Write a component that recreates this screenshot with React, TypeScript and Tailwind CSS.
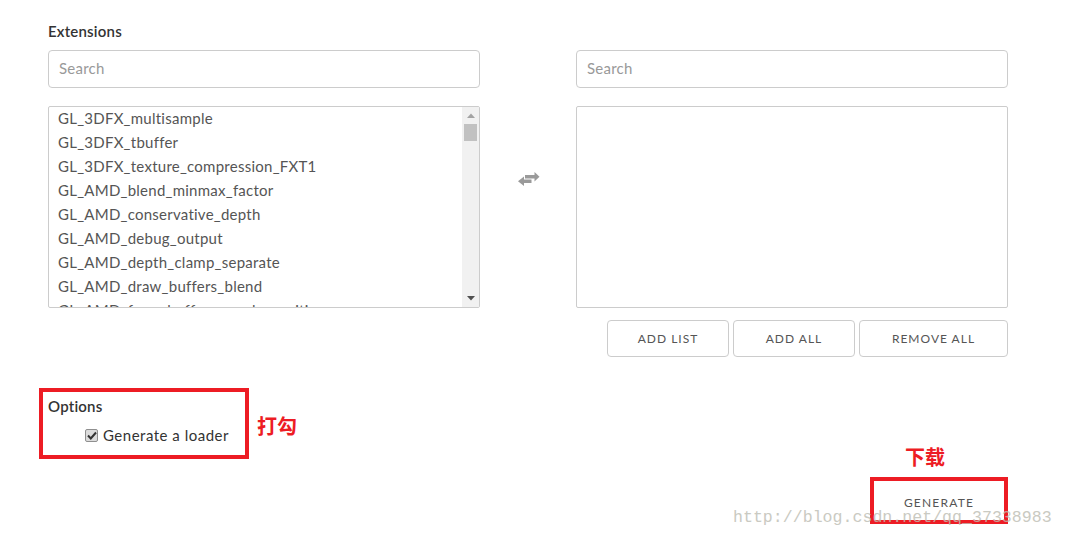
import React from "react";

const items = [
  "GL_3DFX_multisample",
  "GL_3DFX_tbuffer",
  "GL_3DFX_texture_compression_FXT1",
  "GL_AMD_blend_minmax_factor",
  "GL_AMD_conservative_depth",
  "GL_AMD_debug_output",
  "GL_AMD_depth_clamp_separate",
  "GL_AMD_draw_buffers_blend",
  "GL_AMD_framebuffer_sample_positions",
];

function SwapIcon() {
  return (
    <svg width="22" height="16" viewBox="0 0 22 16" fill="#9a9a9a">
      <rect x="7" y="4" width="10" height="3.5" />
      <polygon points="16.5,1 21.5,5.75 16.5,10.5" />
      <rect x="5.5" y="8.5" width="8" height="3.5" />
      <polygon points="0,10.25 6,5.5 6,15" />
    </svg>
  );
}

export default function App() {
  return (
    <div
      className="relative w-[1065px] h-[537px] bg-white overflow-hidden text-[#555]"
      style={{ fontFamily: "Lato, 'Noto Sans', sans-serif" }}
    >
      <div className="ml-[48px] w-[960px] pt-[21px]">
        <div className="text-[15px] font-semibold text-[#333] leading-[21px] tracking-[0.2px]">Extensions</div>

        <div className="mt-[8px] flex gap-[96px]">
          {/* left column */}
          <div className="w-[432px] flex flex-col gap-[18px]">
            <div className="h-[38px] border border-[#cccccc] rounded-[4px] flex items-center px-[10px] pb-[1px] text-[15px] text-[#999] tracking-[0.25px]">
              Search
            </div>
            <div className="h-[202px] border border-[#cccccc] rounded-[2px] flex overflow-hidden">
              <div className="flex-1 pl-[9px] overflow-hidden">
                {items.map((it) => (
                  <div key={it} className="h-[24px] leading-[22px] text-[15px] text-[#555] whitespace-nowrap tracking-[0.25px]">
                    {it}
                  </div>
                ))}
              </div>
              <div className="w-[17px] bg-[#f1f1f1] flex flex-col items-center">
                <div className="h-[17px] flex items-center justify-center">
                  <svg width="8" height="5" viewBox="0 0 8 5"><polygon points="0,5 4,0.5 8,5" fill="#a3a3a3" /></svg>
                </div>
                <div className="w-[13px] h-[17px] bg-[#c1c1c1]" />
                <div className="flex-1" />
                <div className="h-[17px] flex items-center justify-center">
                  <svg width="8" height="5" viewBox="0 0 8 5"><polygon points="0,0 8,0 4,4.5" fill="#505050" /></svg>
                </div>
              </div>
            </div>
          </div>

          {/* right column */}
          <div className="w-[432px] flex flex-col gap-[18px] relative">
            <div className="h-[38px] border border-[#cccccc] rounded-[4px] flex items-center px-[10px] pb-[1px] text-[15px] text-[#999] tracking-[0.25px]">
              Search
            </div>
            <div className="h-[202px] border border-[#cccccc] rounded-[2px]" />
            <div className="absolute left-[-58px] top-[121px]">
              <SwapIcon />
            </div>
          </div>
        </div>

        <div className="mt-[12px] flex justify-end gap-[4px]">
          {["ADD LIST", "ADD ALL", "REMOVE ALL"].map((b, i) => (
            <div
              key={b}
              className={`${i === 2 ? "w-[149px]" : "w-[122px]"} h-[37px] border border-[#cccccc] rounded-[4px] flex items-center justify-center pt-[1px] text-[12px] tracking-[1px] text-[#555]`}
            >
              {b}
            </div>
          ))}
        </div>

        <div className="flex justify-between items-start mt-[31px]">
          <div className="flex items-start -ml-[9px]">
            <div className="w-[210px] h-[71px] border-[4px] border-[#ed1c24] pl-[5px] pt-[4px]">
              <div className="text-[15px] font-semibold text-[#333] leading-[20px] tracking-[0.2px]">Options</div>
              <div className="flex items-center mt-[9px] ml-[37px]">
                <span className="w-[13px] h-[13px] border border-[#8f8f8f] rounded-[2px] bg-[#dcdcdc] flex items-center justify-center">
                  <svg width="10" height="9" viewBox="0 0 10 9">
                    <path d="M1 4.5 L3.8 7.5 L9 1.5" stroke="#333" strokeWidth="2" fill="none" />
                  </svg>
                </span>
                <span className="ml-[5px] text-[15px] text-[#333] leading-[20px] tracking-[0.5px]">Generate a loader</span>
              </div>
            </div>
            <div
              className="ml-[8px] mt-[25px] text-[20px] font-bold text-[#ed1c24] leading-[26px]"
              style={{ fontFamily: "'Noto Sans CJK SC', sans-serif" }}
            >
              打勾
            </div>
          </div>

          <div className="mt-[57px] w-[138px] flex flex-col">
            <div
              className="pl-[35px] text-[20px] font-bold text-[#ed1c24] leading-[24px]"
              style={{ fontFamily: "'Noto Sans CJK SC', sans-serif" }}
            >
              下载
            </div>
            <div className="mt-[8px] h-[47px] border-[4px] border-[#ed1c24] flex items-center justify-center pt-[4px] text-[12px] tracking-[1.2px] text-[#555]">
              GENERATE
            </div>
          </div>
        </div>
      </div>

      <div
        className="absolute left-[733px] top-[507px] text-[16.6px] leading-[22px] text-[#bdbdb3] opacity-80 whitespace-nowrap"
        style={{ fontFamily: "'Liberation Mono', monospace" }}
      >
        http://blog.csdn.net/qq_37338983
      </div>
    </div>
  );
}
